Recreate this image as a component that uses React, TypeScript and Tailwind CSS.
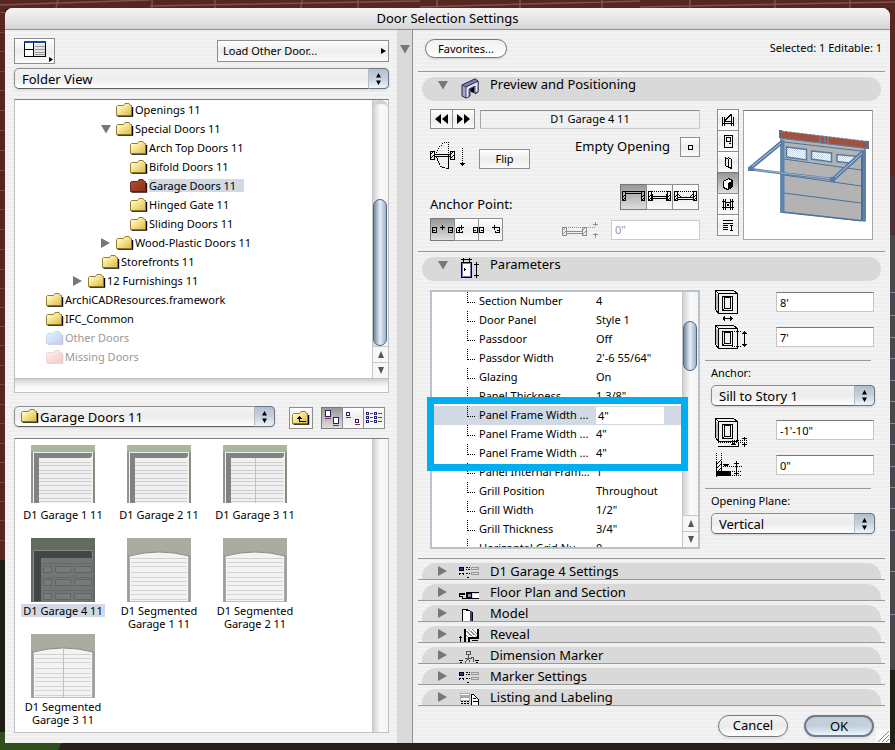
import React from "react";

type TreeItem = {
  label: string;
  depth: number;
  arrow?: "open" | "closed";
  tone?: "yellow" | "red" | "blue" | "pink";
};

const treeItems: TreeItem[] = [
  { label: "Openings 11", depth: 5 },
  { label: "Special Doors 11", depth: 5, arrow: "open" },
  { label: "Arch Top Doors 11", depth: 6 },
  { label: "Bifold Doors 11", depth: 6 },
  { label: "Garage Doors 11", depth: 6, tone: "red" },
  { label: "Hinged Gate 11", depth: 6 },
  { label: "Sliding Doors 11", depth: 6 },
  { label: "Wood-Plastic Doors 11", depth: 5, arrow: "closed" },
  { label: "Storefronts 11", depth: 4 },
  { label: "12 Furnishings 11", depth: 3, arrow: "closed" },
  { label: "ArchiCADResources.framework", depth: 0 },
  { label: "IFC_Common", depth: 0 },
  { label: "Other Doors", depth: 0, tone: "blue" },
  { label: "Missing Doors", depth: 0, tone: "pink" },
];

const doors = [
  { label: "D1 Garage 1 11", kind: "flat" },
  { label: "D1 Garage 2 11", kind: "flat" },
  { label: "D1 Garage 3 11", kind: "flat", split: true },
  { label: "D1 Garage 4 11", kind: "dark" },
  { label: "D1 Segmented Garage 1 11", kind: "arch" },
  { label: "D1 Segmented Garage 2 11", kind: "arch" },
  { label: "D1 Segmented Garage 3 11", kind: "arch", split: true },
];

const parameters = [
  ["Section Number", "4"],
  ["Door Panel", "Style 1"],
  ["Passdoor", "Off"],
  ["Passdor Width", "2'-6 55/64\""],
  ["Glazing", "On"],
  ["Panel Thickness", "1 3/8\""],
  ["Panel Frame Width ...", "4\""],
  ["Panel Frame Width ...", "4\""],
  ["Panel Frame Width ...", "4\""],
  ["Panel Internal Fram...", "1\""],
  ["Grill Position", "Throughout"],
  ["Grill Width", "1/2\""],
  ["Grill Thickness", "3/4\""],
  ["Horizontal Grid Nu...", "0"],
];

const folderTones = {
  yellow: { from: "#fff8bd", to: "#dfb83c", line: "#8a6f1e", shadow: "#000" },
  red: { from: "#a8492b", to: "#8a3216", line: "#5c1d0c", shadow: "#2a0d05" },
  blue: { from: "#d9f1fd", to: "#c5cdf3", line: "#c9d3ec", shadow: "#c2c6dd" },
  pink: { from: "#fde9e6", to: "#f6c9c6", line: "#eed3d0", shadow: "#dcc8c6" },
};

const Folder = ({ tone = "yellow" }: { tone?: keyof typeof folderTones }) => {
  const c = folderTones[tone];
  return (
    <svg width="18" height="14" viewBox="0 0 18 14" className="shrink-0">
      <defs>
        <linearGradient id={"folder-" + tone} x1="0" y1="0" x2="1" y2="1">
          <stop offset="0.2" stopColor={c.from} />
          <stop offset="1" stopColor={c.to} />
        </linearGradient>
      </defs>
      <path d="M1.5 13h15V4" fill="none" stroke={c.shadow} strokeWidth="1.4" />
      <path
        d="M.5 12.5v-9l1-1h6l1.500-2h4l1.500 2H15.500v10z"
        fill={"url(#folder-" + tone + ")"}
        stroke={c.line}
        strokeWidth=".9"
      />
    </svg>
  );
};

const Triangle = ({ open = false, className = "" }: { open?: boolean; className?: string }) => (
  <svg width="10" height="10" viewBox="0 0 10 10" className={"shrink-0 " + className}>
    <path d={open ? "M0 1h10L5 9.500z" : "M0 0v10l9-5z"} fill="#777" />
  </svg>
);

const Arrows = () => (
  <span className="pointer-events-none absolute inset-y-0 right-0 flex w-[21px] flex-col items-center justify-center rounded-r-[5px] border border-[#6b7784] border-l-[#b3bdc9] bg-linear-to-b from-[#b3c0d0] via-[#c6d1dd] to-[#eef6fb]">
    <svg width="5" height="12" viewBox="0 0 5 12">
      <path d="M2.500 0L5 4.500H0zM2.500 12L5 7.500H0z" fill="#000" />
    </svg>
  </span>
);

type PopupProps = { label: string; value: string; className?: string; icon?: boolean };

const Popup = ({ label, value, className = "", icon }: PopupProps) => (
  <div className={"relative h-[21px] " + className}>
    <select
      aria-label={label}
      className={
        "block h-full w-full appearance-none rounded-[5px] border border-[#8d8d8d] border-b-[#5e5e5e] bg-linear-to-b from-[#f3f3f3] via-[#ececec] to-white text-[13px] leading-4 shadow-sm outline-none " +
        (icon ? "pl-[25px]" : "pl-[7px]")
      }
    >
      <option>{value}</option>
    </select>
    {icon && (
      <span className="pointer-events-none absolute top-[3px] left-[7px]">
        <Folder />
      </span>
    )}
    <Arrows />
  </div>
);

const squareButton = "flex items-center justify-center border border-[#8e8e8e] bg-linear-to-b from-white via-[#ededed] to-[#fbfbfb]";
const pressedButton = "flex items-center justify-center border border-[#777] bg-linear-to-b from-[#989898] to-[#dedede]";
const field = "border border-[#c4c4c4] border-t-[#777] bg-white px-[3px] text-[11px] outline-none";

const ScrollArrows = () => (
  <>
    {["M4.500 0L9 8H0z", "M0 0h9L4.500 8z"].map((d) => (
      <button key={d} aria-label="Scroll" className="flex h-4 w-full shrink-0 items-center justify-center border-t border-[#c8c8c8] bg-[#f7f7f7]">
        <svg width="6" height="7" viewBox="0 0 9 8" preserveAspectRatio="none">
          <path d={d} fill="#555" />
        </svg>
      </button>
    ))}
  </>
);

const track = "flex w-4 shrink-0 flex-col border-l border-[#c5c5c5] bg-linear-to-r from-[#d2d2d2] via-[#fafafa] to-[#f4f4f4]";
const thumb = "mr-px rounded-full border border-[#52647a] bg-linear-to-r from-[#74899f] via-[#e4eef8] to-[#9fb1c6]";

const Pixels = ({ w, h, d, children, className = "" }: { w: number; h: number; d?: string; children?: React.ReactNode; className?: string }) => (
  <svg
    width={w}
    height={h}
    viewBox={"0 0 " + w + " " + h}
    fill="none"
    stroke="#000"
    shapeRendering="crispEdges"
    className={"shrink-0 " + className}
  >
    {d && <path d={d} />}
    {children}
  </svg>
);

const Thumbnail = ({ kind, split }: { kind: string; split?: boolean }) => {
  const dark = kind === "dark";
  const arch = kind === "arch";
  return (
    <svg width="64" height="64" viewBox="0 0 64 64" className="shrink-0">
      {kind === "flat" && (
        <g>
          <path d="M0 3h64v58H0z" fill="#a9b59e" />
          <path d="M2 10h60V61H2z" fill="#eef0ea" />
          <path d="M0 10h2v51H0z" fill="#92968f" />
          <path d="M3 11h58v3l-2 2H8v45H3z" fill="#828282" />
          <path d="M8 16h52v45H8z" fill="#f1f1f1" />
          <path d="M63 10v51" stroke="#7e817b" strokeWidth="1.500" />
          <path d="M8 20.500h52M8 23.500h52M8 28.500h52M8 31.500h52M8 36.500h52M8 39.500h52M8 43.500h52M8 48.500h52M8 51.500h52M8 56.500h52M8 59.500h52" stroke="#cdcdcd" />
          {split && <path d="M32.500 16v45" stroke="#c2c2c2" />}
        </g>
      )}
      {dark && (
        <g>
          <path d="M0 0h64v64H0z" fill="#626b5d" />
          <path d="M2.500 12.500h59V64h-59z" fill="#424746" stroke="#858b82" />
          <path d="M10 20h52v44H10z" fill="#727776" />
          <path d="M10 25.500h52M10 39.500h52M10 52.500h52" stroke="#666b6a" />
          <path d="M12.500 28.500h8v6h-8zM24.500 28.500h15v6h-15zM43.500 28.500h17v6h-17zM12.500 41.500h8v6h-8zM24.500 41.500h15v6h-15zM43.500 41.500h17v6h-17zM12.500 55.500h8v6h-8zM24.500 55.500h15v6h-15zM43.500 55.500h17v6h-17z" fill="#777c7b" stroke="#5f6564" />
        </g>
      )}
      {arch && (
        <g>
          <path d="M0 0h64v64H0z" fill="#a8ad9f" />
          <path d="M2 64V18Q32 10 62 18v46z" fill="#f3f3f3" stroke="#8b8d87" />
          <path d="M4 20.500h56M4 24.500h56M4 28.500h56M4 34.500h56M4 39.500h56M4 43.500h56M4 47.500h56M4 52.500h56M4 56.500h56M4 61.500h56" stroke="#d3d3d3" />
          <path d="M1.500 17v47M62.500 17v47" stroke="#9a9c98" strokeWidth="2" />
          {split && <path d="M32.500 14v50" stroke="#c0c0c0" />}
        </g>
      )}
    </svg>
  );
};

const DoorPreview = () => (
  <svg width="128" height="127" viewBox="1 0 128 127">
    <defs>
      <pattern id="glass" width="2" height="2" patternUnits="userSpaceOnUse">
        <path d="M0 0h2v2H0z" fill="#fff" />
        <path d="M0 0h1v1H0zM1 1h1v1H1z" fill="#c6d3df" />
      </pattern>
    </defs>
    <path d="M38 27l84 10v73l-84-9z" fill="#b3b3b3" stroke="#567ba3" strokeWidth="1.500" />
    <path d="M41 31l77 9M41 48l77 11M41 64l77 11M41 82l77 10M41 101l77 9" fill="none" stroke="#4a729c" />
    <path d="M43.500 36l20 2.500v10.500l-20-3zM68.500 40l20 2v9l-20-3zM94 43.500l21 2-5 7-16-2z" fill="url(#glass)" stroke="#567ba3" strokeWidth="1.500" />
    <path d="M39.500 29v72.500" stroke="#5d83ab" strokeWidth="4" />
    <path d="M120.500 39v70" stroke="#5d83ab" strokeWidth="5" />
    <path d="M119 40v69" stroke="#31567e" strokeWidth=".8" />
    <path d="M38 20l87 10.500v7L38 27z" fill="#a3503c" stroke="#6680a0" strokeDasharray="3 1" />
    <path d="M37.500 19v8M124.500 30v8" stroke="#666a82" strokeWidth="3" />
    <path d="M77 25v7M82 25.500v7M85 26v7" stroke="#6680a0" strokeWidth="1.500" />
    <path d="M7 57.500L39 31M90 68.500L120 41" stroke="#527aa5" strokeWidth="4" />
    <path d="M9 55.500L38 32M92 66.500L119 42" stroke="#dce7f1" strokeWidth=".8" />
    <path d="M5.500 58L92 68.500" stroke="#527aa5" strokeWidth="2.500" />
    <path d="M12 58.800L90 68" stroke="#b7c6d5" strokeWidth=".8" />
    <path d="M5 56h5v4H5zM87 66h5v5h-5z" fill="#527aa5" />
  </svg>
);

const Hatched = ({ x, y }: { x: number; y: number }) => (
  <path d={`M${x + 0.5} ${y + 0.5}h4v8h-4zM${x} ${y + 4}l4-4M${x} ${y + 8}l5-5`} />
);

const FrameIcon = ({ kind }: { kind: "width" | "height" | "sill" }) => (
  <Pixels w={36} h={32}>
    <path d="M4.500 3.500h19v20h-19zM4.500 3.500l-3-3h18l4 3M1.500 .5v19l3 4M8.500 6.500h10v14h-10z" />
    <path d="M10.500 7.500h6v11h-6zM11 18l-2 2" />
    <path d="M2 4v15l2 2V5z" fill="#bbb" stroke="none" />
    {kind === "width" && <path d="M8.500 28.500h10M10.500 26v5M16.500 26v5M9.500 27v3M17.500 27v3" />}
    {kind === "height" && (
      <g>
        <path d="M18 6.500h10M18 21.500h10" strokeDasharray="1 1" />
        <path d="M30.500 6v16M28 8.500h5M28 19.500h5M29 7.500h3M29 20.500h3" />
      </g>
    )}
    {kind === "sill" && (
      <g>
        <path d="M4 24.500h30M18 22.500h15" strokeDasharray="1 1" />
        <path d="M4 28.500h20v-5M17 26.500h5M18 25.500h3M30.500 19v3M30.500 25v4M28 20.500h5M28 26.500h5" />
      </g>
    )}
  </Pixels>
);

const SillIcon = () => (
  <Pixels w={36} h={26}>
    <path d="M2.500 0v7M7.500 0v7" strokeDasharray="1 1" />
    <path d="M2.500 8v16M7.500 8v10M3 11l4-4M3 15l4-4M3 19l4-4" />
    <path d="M3 18h13v4H3z" fill="#000" />
    <path d="M9 13.500h19M16 18.500h12M16 22.500h12" strokeDasharray="1 1" />
    <path d="M9 11.500h6M10 12.500h4M22.500 8v15M20 10.500h5M20 20.500h5" />
  </Pixels>
);

const anchorIcons = [
  "M1.500 6.500h4v5h-4zM2 9.500h2M17.500 6.500h4v5h-4zM19 9.500h2M11.500 4v5M9 6.500h5",
  "M1.500 6.500h3v5h-3v-5M2 11.500h5v-2M3 9.500h2M6.500 4v5M4 6.500h5M18.500 6.500h4v5h-4zM19 9.500h2",
  "M.5 6.500h4v5h-4zM2 9.500h2M15.500 4v5M13 6.500h5M17 6.500h4M20.500 7v5M16 11.500h4M16.500 10v2M18 9.500h2",
];

const viewIcons = [
  "M.5 3v9M2.500 3v9M9.500 3v9M11.500 3v9M0 9.500h12M3 6.500l6-6M9.500 0v3M3 7.500h6",
  "M2.500 .5h8v12h-8zM4.500 2.500h4v4h-4zM7 8.500h2",
  "M3.500 1.500l3 2v8l-3-2zM6.500 1.500l3 2v9l-2-1",
  "M1.500 4.500l5-3 4 2v6l-5 3-4-2z",
  "M1.500 1v11M3.500 1v11M8.500 1v11M10.500 1v11M0 3.500h4M0 9.500h4M8 3.500h4M8 9.500h4M4 4.500h4v5H4M5 6l2 2M7 6L5 8",
  "M1 1.500h10M1 4.500h10M1 6.500h5M1 8.500h5M1 10.500h5M8 6.500h3M9.500 7v5M8 11.500h3",
];

const sections = [
  "D1 Garage 4 Settings",
  "Floor Plan and Section",
  "Model",
  "Reveal",
  "Dimension Marker",
  "Marker Settings",
  "Listing and Labeling",
];

const SectionIcon = ({ index }: { index: number }) => (
  <Pixels w={22} h={14}>
    {(index === 0 || index === 5) && (
      <g>
        <path d="M1.500 2.500h4v3h-4z" fill="#33338a" />
        <path d="M8 2.500h4M8 4.500h1M10 4.500h2M1 8.500h5M8 8.500h4M9 12.500h3" strokeDasharray="2 1" />
        <path d="M13.500 2.500h7v2h-7zM13.500 7.500h7v2h-7z" stroke="#999" />
        <path d="M1.500 8v2M5.500 8v2" />
      </g>
    )}
    {index === 1 && (
      <g>
        <path d="M1 7h6v2H1zM8 6h6v7H8zM14 6h7v1h-7z" fill="#000" stroke="none" />
        <path d="M10 8h3v3h-3z" fill="#8888bd" stroke="none" />
        <path d="M1.500 7v3h3v3M5 12.500h16M15 9.500h5" />
        <path d="M15 8h6v4h-6z" fill="#fff" stroke="none" />
      </g>
    )}
    {index === 2 && (
      <g>
        <path d="M4.500 14V2.500l7 1 3 2V14M4.500 2.500h4l5 2" fill="#fff" />
        <path d="M13 4v10" stroke="#40407b" strokeWidth="2" />
      </g>
    )}
    {index === 3 && (
      <g>
        <path d="M6 1h14v9H6z" fill="#fff" stroke="none" />
        <path d="M6 1l10 9M10 1l9 8M14 1l5 5M6 5l6 6" stroke="#888" />
        <path d="M7 1v13M12 10h8V1M11 9v5" strokeWidth="2" />
        <path d="M2.500 8v6M1 9.500h3M14 12.500h6" />
      </g>
    )}
    {index === 4 && (
      <g>
        <path d="M10.500 6v4M7 13.500l3-4 2 3M7 9.500h7M15.500 8v5M13 8.500h2" stroke="#555" />
        <circle cx="10.500" cy="4" r="2" stroke="#555" />
        <path d="M1 11h4v1H1zM2 13h2v1H2zM17 11h4v1h-4zM18 13h2v1h-2z" fill="#000" stroke="none" />
      </g>
    )}
    {index === 6 && (
      <g>
        <path d="M2.500 2.500h9v7h-9z" fill="#fff" stroke="#aaa" />
        <path d="M3 5h8" stroke="#a5a5bc" strokeWidth="3" />
        <path d="M3 10.500h9M3 12.500h9" strokeDasharray="2 1" />
        <path d="M13.500 14V3.500h2l5 5V14M15 7.500h3M15 10.500h5" fill="#fff" />
      </g>
    )}
  </Pixels>
);

const LabelledField = ({ label, value, icon }: { label: string; value: string; icon: React.ReactNode }) => (
  <label className="flex h-[35px] items-start justify-between pr-px pl-1">
    {icon}
    <input aria-label={label} defaultValue={value} className={field + " mt-[2px] h-5 w-[98px]"} />
  </label>
);

const Backdrop = () => (
  <svg className="absolute inset-0 h-full w-full" viewBox="0 0 895 750" preserveAspectRatio="none">
    <path d="M0 0h895v750H0z" fill="#201f17" />
    <path d="M0 0h895v245h-5V9H5v551H0z" fill="#562621" />
    <path
      d="M0 5L150 0M150 6L420 1M420 7L640 1M640 7L895 2M58 0l-2 8M152 0v8M215 0v8M302 0l-1 8M358 0v8M437 0v8M520 0v8M602 0v8M690 0v8M775 0v8M850 0v8"
      stroke="#7c5348"
      strokeWidth="1.500"
    />
    <path d="M0 12.500h5M0 32.500h5M0 51.500h5M0 71.500h5M0 90.500h5M0 110.500h5M0 130.500h5M0 150.500h5M0 170.500h5M0 190.500h5M0 209.500h5M0 229.500h5M0 249.500h5M0 269.500h5M0 288.500h5M0 307.500h5M0 326.500h5M0 345.500h5M0 365.500h5M0 384.500h5M0 404.500h5M0 423.500h5M0 443.500h5M0 462.500h5M0 482.500h5M0 501.500h5M0 520.500h5M0 540.500h5" stroke="#76443c" />
    <path d="M890 175h5v60h-5z" fill="#4b3236" />
    <path d="M890 235h5v435h-5z" fill="#47484b" />
    <path d="M890 292.500h5M890 315.500h5M890 337.500h5M890 358.500h5M890 380.500h5M890 401.500h5M890 423.500h5M890 444.500h5M890 466.500h5M890 487.500h5M890 508.500h5M890 530.500h5M890 571.500h5M890 614.500h5" stroke="#83909b" />
    <path d="M0 732h70l-12 18H0z" fill="#304f1f" />
    <path d="M60 744h835v6H60z" fill="#29221a" />
  </svg>
);

const LeftPanel = () => (
  <div className="flex w-[392px] shrink-0 flex-col pt-2 pr-2 pb-[9px] pl-[9px]">
    <div className="flex h-[30px] items-start justify-between">
      <button aria-label="Change view" className={squareButton + " relative h-[26px] w-[41px]"}>
        <Pixels w={22} h={16} className="mb-1">
          <path d="M.5 .5h21v15H.5z" fill="#fff" />
          <path d="M0 0h22v2H0z" fill="#17479b" stroke="none" />
          <path d="M0 8.500h10M9.500 2v14" />
          <path d="M10 3h11v12H10z" fill="#e4e4e4" stroke="none" />
          <path d="M11 5.500h10M11 8.500h10M11 11.500h10M11 13.500h10" stroke="#999" />
        </Pixels>
        <svg width="4" height="5" viewBox="0 0 4 5" className="absolute right-px bottom-px">
          <path d="M0 0v5l4-2.500z" />
        </svg>
      </button>
      <button className={squareButton + " mt-[2px] h-[22px] w-[172px] justify-between! pr-[2px] pl-[5px] text-[11px]"}>
        Load Other Door...
        <svg width="5" height="6" viewBox="0 0 5 6">
          <path d="M0 0v6l5-3z" />
        </svg>
      </button>
    </div>

    <Popup label="View" value="Folder View" />

    <div className="mt-[10px] border-x border-t border-[#c0c0c0] border-t-[#7f7f7f] bg-white">
      <div className="flex h-[278px]">
        <ul className="flex-1">
          {treeItems.map((item) => (
            <li
              key={item.label}
              className="flex h-[19px] items-center text-[11px]"
              style={{ paddingLeft: 16 + item.depth * 14 }}
            >
              <span className="flex w-[15px] shrink-0">
                {item.arrow && (
                  <button aria-label={"Toggle " + item.label}>
                    <Triangle open={item.arrow === "open"} />
                  </button>
                )}
              </span>
              <Folder tone={item.tone} />
              <span
                className={
                  "ml-px h-[13px] leading-[13px] " +
                  (item.tone === "red" ? "bg-[#d0d9e4] pr-2" : item.tone ? "text-[#999]" : "")
                }
              >
                {item.label}
              </span>
            </li>
          ))}
        </ul>
        <div className={track}>
          <div className="h-[99px] rounded-t-full border-t-4 border-[#d0d0d0]" />
          <div className={thumb + " flex-1"} />
          <ScrollArrows />
        </div>
      </div>
      <div className="h-[15px] border-y border-[#c0c0c0] bg-linear-to-b from-[#d0d0d0] via-[#f6f6f6] to-white" />
    </div>

    <div className="mt-[13px] flex items-start">
      <Popup label="Folder" value="Garage Doors 11" className="w-[261px]" icon />
      <button aria-label="Parent folder" className={squareButton + " mt-px ml-[14px] h-[22px] w-6"}>
        <span className="relative">
          <Folder />
          <Pixels w={10} h={8} d="M3.500 1v5h6M1 3.500h5M2 2.500h3" className="absolute top-1 left-1" />
        </span>
      </button>
      <div className="mt-px ml-2 flex">
        <button aria-label="Large icons" className={pressedButton + " h-[22px] w-[22px]"}>
          <Pixels w={16} h={16}>
            <path d="M1.500 .5h5v6h-5zM9.500 7.500h5v6h-5z" fill="#fff" stroke="#23236d" />
            <path d="M1 8.500h6M9 15.500h6" stroke="#9b2d35" />
          </Pixels>
        </button>
        <button aria-label="Small icons" className={squareButton + " -ml-px h-[22px] w-[22px]"}>
          <Pixels w={16} h={15}>
            <path d="M1.500 1.500h3v3h-3zM10.500 8.500h3v3h-3z" stroke="#23236d" />
            <path d="M1 6.500h5M10 13.500h5" stroke="#9b2d35" />
          </Pixels>
        </button>
        <button aria-label="List" className={squareButton + " -ml-px h-[22px] w-[22px]"}>
          <Pixels w={18} h={14}>
            <path d="M1.500 1.500h2v2h-2zM1.500 5.500h2v2h-2zM1.500 9.500h2v2h-2zM9.500 1.500h2v2h-2zM9.500 5.500h2v2h-2zM9.500 9.500h2v2h-2z" stroke="#23236d" />
            <path d="M5 2.500h3M5 6.500h3M5 10.500h3M13 2.500h4M13 6.500h4M13 10.500h4" stroke="#9b2d35" />
          </Pixels>
        </button>
      </div>
    </div>

    <div className="mt-[9px] flex h-[295px] border border-[#c0c0c0] border-t-[#7f7f7f] bg-white">
      <div className="grid flex-1 auto-rows-[96px] grid-cols-[repeat(auto-fill,96px)]">
        {doors.map((door) => (
          <button key={door.label} className="flex flex-col items-center gap-[2px] pt-[3px] text-[11px] leading-[13px]">
            <Thumbnail kind={door.kind} split={door.split} />
            <span className={door.kind === "dark" ? "bg-[#d0d9e4] px-[2px] whitespace-nowrap" : "max-w-[86px]"}>{door.label}</span>
          </button>
        ))}
      </div>
      <div className={track} />
    </div>
  </div>
);

const PreviewSection = () => (
  <div className="flex pt-2 pr-3 pl-3">
    <div className="flex min-w-0 flex-1 flex-col">
      <div className="flex h-5 gap-[5px]">
        <div className="flex">
          <button aria-label="Previous" className={squareButton + " w-[23px]"}>
            <svg width="13" height="10" viewBox="0 0 13 10">
              <path d="M6 0v10L0 5zM13 0v10L7 5z" />
            </svg>
          </button>
          <button aria-label="Next" className={squareButton + " -ml-px w-[23px]"}>
            <svg width="13" height="10" viewBox="0 0 13 10">
              <path d="M0 0v10l6-5zM7 0v10l6-5z" />
            </svg>
          </button>
        </div>
        <div className="mt-px flex flex-1 items-center justify-center border border-[#c9c9c9] border-t-[#8c8c8c] border-l-[#a5a5a5] text-[11px]">
          D1 Garage 4 11
        </div>
      </div>

      <div className="mt-2 flex items-start">
        <Pixels w={37} h={30} className="mt-1">
          <Hatched x={0} y={10} />
          <Hatched x={20} y={10} />
          <path d="M5 13.500h15M5 15.500h15M18.500 14v13h-3M15 26.500h-3M12 25.500h-2M9.500 24v-2M8.500 22v-2M7.500 20v-3M6.500 17v-2" />
          <path d="M18.500 1v12M17 1.500h-3M13 2.500l-4 4M8.500 7l-2 5M32.500 7v16" strokeDasharray="1 1" />
          <path d="M30 22.500h5M31 23.500h3M32 24.500h1" />
        </Pixels>
        <button className={squareButton + " mt-3 ml-3 h-5 w-[51px] text-[11px]"}>Flip</button>
        <label className="ml-auto flex items-center gap-[10px] text-[13px]">
          Empty Opening
          <button aria-label="Empty Opening" className={squareButton + " h-5 w-5"}>
            <Pixels w={5} h={5} d="M.5 .5h4v4h-4z" />
          </button>
        </label>
      </div>

      <div className="mt-[13px] flex items-end justify-between">
        <span className="leading-3 text-[13px]">Anchor Point:</span>
        <div className="flex pr-px">
          {[0, 1, 2].map((n) => (
            <button key={n} aria-label={"Wall position " + (n + 1)} className={(n === 0 ? pressedButton : squareButton + " -ml-px") + " h-[26px] w-[27px]"}>
              <Pixels w={25} h={18}>
                <path d="M1.500 3.500h3v9h-3zM2 9l3-3M2 12l3-3M20.500 3.500h3v9h-3zM21 9l3-3M21 12l3-3" />
                <path d={n === 0 ? "M1 3.500h23M5 5.500h15" : n === 1 ? "M5 8.500h15M5 10.500h15M5.500 6v7M19.500 6v7" : "M5 9.500h15M5 11.500h15M4 5l4 4M21 5l-4 4"} />
                {n > 0 && <path d="M1 3.500h23" strokeDasharray="1 1" />}
              </Pixels>
            </button>
          ))}
        </div>
      </div>

      <div className="mt-2 flex items-center">
        <div className="flex">
          {anchorIcons.map((d, i) => (
            <button key={d} aria-label={"Anchor " + (i + 1)} className={(i === 0 ? pressedButton : squareButton + " -ml-px") + " h-[23px] w-[25px]"}>
              <Pixels w={23} h={17} d={d} />
            </button>
          ))}
        </div>
        <label className="ml-auto flex items-center gap-[13px]">
          <Pixels w={36} h={16} className="opacity-40">
            <Hatched x={0} y={5} />
            <Hatched x={20} y={5} />
            <path d="M5 9.500h15M5 11.500h15M33.500 0v4M31 2.500h5M33.500 11v5M31 12.500h5" />
            <path d="M0 5.500h34" strokeDasharray="1 1" />
          </Pixels>
          <input aria-label="Reveal depth" disabled defaultValue={'0"'} className={field + " h-5 w-[89px] border-[#ccc]! text-[#999]"} />
        </label>
      </div>
    </div>

    <div className="mr-1 ml-[17px] flex w-[22px] flex-col">
      {viewIcons.map((d, i) => (
        <button key={d} aria-label={"Preview mode " + (i + 1)} className={(i === 3 ? pressedButton : squareButton) + " -mb-px h-[22px] w-full"}>
          <Pixels w={12} h={13}>
            <path d={d} fill={i === 3 ? "#fff" : "none"} />
            {i === 3 && <path d="M6.500 6.500l4-2v5l-4 3z" fill="#000" />}
          </Pixels>
        </button>
      ))}
    </div>
    <div className="mt-px h-[130px] w-[130px] border border-[#a5a5a5] border-t-[#777] bg-white">
      <DoorPreview />
    </div>
  </div>
);

const ParameterSection = () => (
  <div className="flex gap-[5px] pt-[9px] pr-[10px] pl-3">
    <div className="relative min-w-0 flex-1">
      <div className="flex h-[259px] overflow-hidden border-2 border-[#b8c2cc] bg-white">
        <div className="flex-1 overflow-hidden">
          <table className="w-full table-fixed border-collapse text-[11px]">
            <tbody>
              {parameters.map(([name, value], i) => (
                <tr key={i} className={"h-[19px] " + (i === 6 ? "bg-[#d0d9e4]" : "")}>
                  <td className="w-[164px] p-0">
                    <div className="flex h-[19px] items-center pl-[35px] whitespace-nowrap">
                      <span className="mr-1 h-[11px] w-2 shrink-0 self-start border-b border-l border-dotted border-black" />
                      {name}
                    </div>
                  </td>
                  <td className="p-0">
                    {i === 6 ? (
                      <input aria-label={name} defaultValue={value} className="block h-[17px] w-[68px] bg-white px-[2px] outline-none" />
                    ) : (
                      value
                    )}
                  </td>
                </tr>
              ))}
            </tbody>
          </table>
        </div>
        <div className={track}>
          <div className="h-[29px] shrink-0 rounded-t-full" />
          <div className={thumb + " h-[50px] shrink-0"} />
          <div className="flex-1" />
          <ScrollArrows />
        </div>
      </div>
      <div className="pointer-events-none absolute top-[107px] right-3 -left-[3px] h-[74px] border-[7px] border-[#00aeef]" />
    </div>

    <div className="flex w-[170px] flex-col">
      <div className="pl-[5px]">
        <LabelledField label="Width" value="8'" icon={<FrameIcon kind="width" />} />
        <LabelledField label="Height" value="7'" icon={<FrameIcon kind="height" />} />
      </div>
      <div className="mr-1 border-t border-[#999]" />
      <div className="pl-[6px]">
        <p className="mt-1 mb-1 text-[11px] leading-4">Anchor:</p>
        <Popup label="Anchor" value="Sill to Story 1" />
      </div>
      <div className="mt-3 pl-[5px]">
        <LabelledField label="Sill height" value={"-1'-10\""} icon={<FrameIcon kind="sill" />} />
        <LabelledField label="Sill to story" value={'0"'} icon={<SillIcon />} />
      </div>
      <div className="mr-1 border-t border-[#999]" />
      <div className="pl-[6px]">
        <p className="mt-1 mb-1 text-[11px] leading-4">Opening Plane:</p>
        <Popup label="Opening Plane" value="Vertical" />
      </div>
    </div>
  </div>
);

const OpenHeader = ({ title, icon }: { title: string; icon: React.ReactNode }) => (
  <button className="mx-1 mt-[5px] flex h-6 items-start rounded-full bg-[#d9d9d9] pl-4 text-left text-[13px] leading-[14px]">
    <Triangle open className="mt-[3px]" />
    <span className="ml-3 w-[26px]">{icon}</span>
    <span className="ml-1">{title}</span>
  </button>
);

const RightPanel = () => (
  <div className="relative flex min-w-0 flex-1 flex-col border-l border-[#8f8f8f] pr-[5px] pl-[5px]">
    <div className="flex h-[42px] items-center justify-between border-b border-[#999] pr-[3px] pl-[7px] text-[11px]">
      <button className="mb-1 h-[19px] w-[82px] rounded-full border border-[#777] bg-linear-to-b from-[#f0f0f0] to-white leading-4 shadow-sm">
        Favorites...
      </button>
      <span className="mb-1">Selected: 1 Editable: 1</span>
    </div>

    <OpenHeader
      title="Preview and Positioning"
      icon={
        <svg width="20" height="23" viewBox="0 0 20 23">
          <path d="M2 8L15 2l3 2v11l-3 2V9l-5 2v8l-4 2-4-2z" fill="#a3a3d1" stroke="#28284f" />
          <path d="M6 10l12-6v11l-3 1V9l-6 3v8l-3 1z" fill="#e8e8f7" stroke="#28284f" strokeWidth=".8" />
          <path d="M2 8l13-6 3 2L6 10z" fill="#7f7fb8" stroke="#28284f" strokeWidth=".8" />
          <path d="M10 12l4-2v6l-3-1z" fill="#000" />
        </svg>
      }
    />
    <PreviewSection />

    <div className="mt-[10px] border-t border-[#999]" />
    <OpenHeader
      title="Parameters"
      icon={
        <Pixels w={20} h={22}>
          <path d="M1.500 5.500h10v15h-10z" fill="#fff" />
          <path d="M2.500 6.500h8v13h-8z" stroke="#7777b8" />
          <path d="M1 2.500h11M3.500 1v4M9.500 1v4M16.500 5v16M14 7.500h5M14 18.500h5M4 12.500h2M4.500 11v3" />
        </Pixels>
      }
    />
    <ParameterSection />

    <div className="mt-[9px] border-t border-[#999]">
      {sections.map((title, i) => (
        <div key={title} className="border-b border-[#999] px-1 pt-1">
          <button className="flex h-4 w-full items-center rounded-t-[14px] bg-[#d9d9d9] pl-4 text-left text-[13px] leading-4">
            <Triangle />
            <span className="ml-[10px] w-7 self-end">
              <SectionIcon index={i} />
            </span>
            <span className="ml-1">{title}</span>
          </button>
        </div>
      ))}
    </div>

    <div className="mt-[9px] mb-[6px] flex justify-end gap-4 pr-[11px] text-[13px]">
      <button className="h-[22px] w-[70px] rounded-full border border-[#777] bg-linear-to-b from-[#f4f4f4] via-[#eaeaea] to-white shadow-sm">
        Cancel
      </button>
      <button className="h-[22px] w-[70px] rounded-full border-2 border-[#6d7b8b] bg-linear-to-b from-[#c3cdd8] via-[#c3d0dc] to-[#eaf6fc] shadow-sm">
        OK
      </button>
    </div>
    <svg width="14" height="14" viewBox="0 0 14 14" className="absolute right-0 bottom-0">
      <path d="M0 0h14v14H0z" fill="#f8f8f8" />
      <path d="M2 13L13 2M6 13l7-7M10 13l3-3" stroke="#888" />
    </svg>
  </div>
);

const App: React.FC = () => {
  return (
    <main className="relative min-h-screen px-[5px] pt-2 pb-[7px] font-['Noto_Sans',sans-serif] text-black">
      <Backdrop />
      <div className="relative overflow-hidden rounded-t-lg bg-[repeating-linear-gradient(to_bottom,#f3f3f3_0px,#f3f3f3_2px,#eeeeee_2px,#eeeeee_4px)]">
        <h1 className="flex h-[22px] items-center justify-center border-b border-[#8f8f8f] bg-linear-to-b from-[#f5f5f5] to-[#d6d6d6] text-[13px]">
          Door Selection Settings
        </h1>
        <div className="flex">
          <LeftPanel />
          <div className="flex w-[15px] shrink-0 justify-center bg-[#dadada] pt-[14px]">
            <Triangle open />
          </div>
          <RightPanel />
        </div>
      </div>
    </main>
  );
};

export default App;
